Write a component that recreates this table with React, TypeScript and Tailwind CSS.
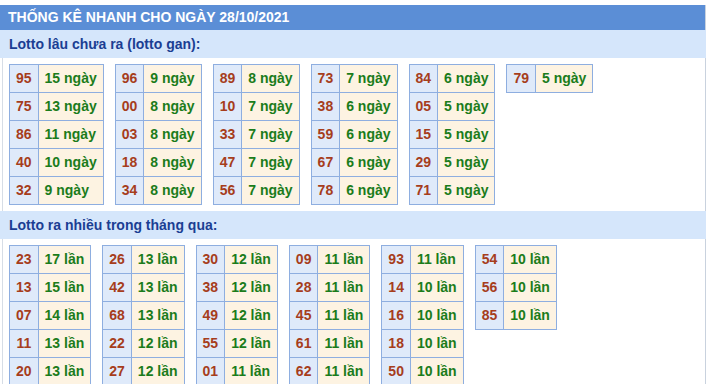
import React from "react";

const gan: [string, string][][] = [
  [["95", "15 ngày"], ["75", "13 ngày"], ["86", "11 ngày"], ["40", "10 ngày"], ["32", "9 ngày"]],
  [["96", "9 ngày"], ["00", "8 ngày"], ["03", "8 ngày"], ["18", "8 ngày"], ["34", "8 ngày"]],
  [["89", "8 ngày"], ["10", "7 ngày"], ["33", "7 ngày"], ["47", "7 ngày"], ["56", "7 ngày"]],
  [["73", "7 ngày"], ["38", "6 ngày"], ["59", "6 ngày"], ["67", "6 ngày"], ["78", "6 ngày"]],
  [["84", "6 ngày"], ["05", "5 ngày"], ["15", "5 ngày"], ["29", "5 ngày"], ["71", "5 ngày"]],
  [["79", "5 ngày"]],
];

const nhieu: [string, string][][] = [
  [["23", "17 lần"], ["13", "15 lần"], ["07", "14 lần"], ["11", "13 lần"], ["20", "13 lần"]],
  [["26", "13 lần"], ["42", "13 lần"], ["68", "13 lần"], ["22", "12 lần"], ["27", "12 lần"]],
  [["30", "12 lần"], ["38", "12 lần"], ["49", "12 lần"], ["55", "12 lần"], ["01", "11 lần"]],
  [["09", "11 lần"], ["28", "11 lần"], ["45", "11 lần"], ["61", "11 lần"], ["62", "11 lần"]],
  [["93", "11 lần"], ["14", "10 lần"], ["16", "10 lần"], ["18", "10 lần"], ["50", "10 lần"]],
  [["54", "10 lần"], ["56", "10 lần"], ["85", "10 lần"]],
];

function Block({ rows }: { rows: [string, string][] }) {
  return (
    <table className="border-collapse border border-[#8eaee0]">
      <tbody>
        {rows.map(([n, v]) => (
          <tr key={n} className="h-[28px]">
            <td className="border border-[#8eaee0] bg-[#dfeafa] px-[6px] text-center text-[#a63d1c]">{n}</td>
            <td className="border border-[#8eaee0] bg-[#fdf3e2] px-[6px] text-[#1b7c1b]">{v}</td>
          </tr>
        ))}
      </tbody>
    </table>
  );
}

function Section({ title, data }: { title: string; data: [string, string][][] }) {
  return (
    <>
      <div className="flex h-[28px] items-center bg-[#d5e6fb] pl-[9px] text-[14px] font-bold text-[#1b3e93]">{title}</div>
      <div className="flex items-start gap-x-[11px] px-[9px] pb-[6px] pt-[6px] text-[14px] font-bold">
        {data.map((rows, i) => (
          <Block key={i} rows={rows} />
        ))}
      </div>
    </>
  );
}

export default function App() {
  return (
    <div className="bg-white pt-[5px]" style={{ fontFamily: '"Liberation Sans", Arial, sans-serif' }}>
      <div className="w-[706px] border-r border-[#c9d2de]">
        <div className="flex h-[25px] items-center bg-[#5b8ed6] pl-[8px] text-[14px] font-bold text-white">
          THỐNG KÊ NHANH CHO NGÀY 28/10/2021
        </div>
        <div className="border-l border-[#d6dde6] ml-[2px] -mr-px">
          <div className="-ml-[3px]">
            <Section title="Lotto lâu chưa ra (lotto gan):" data={gan} />
            <Section title="Lotto ra nhiều trong tháng qua:" data={nhieu} />
          </div>
        </div>
      </div>
    </div>
  );
}
